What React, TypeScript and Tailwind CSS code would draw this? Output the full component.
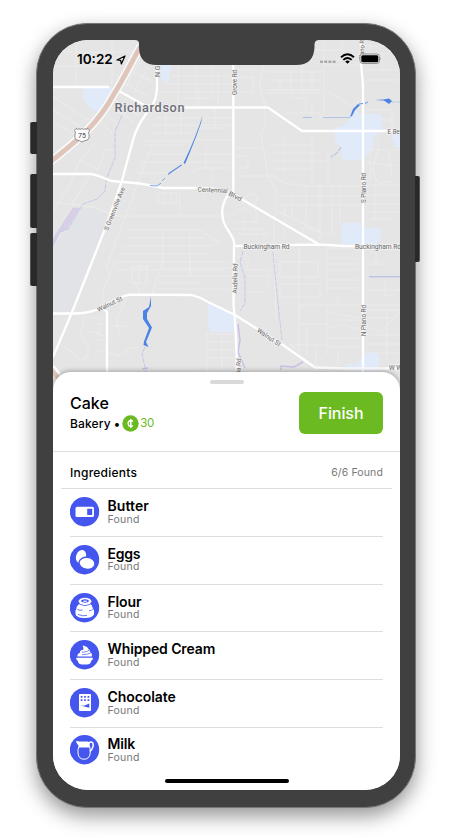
import React from "react";

const MINOR_ROADS = [
  "M53 66 H112 M76 42 V86 M60 52 H138 M112 42 V84 M53 96 L84 118 L102 122 M53 110 L84 129 M53 122 L78 136 M99 120 L112 133",
  "M115 100 L140 116 M110 107 L134 122 M104 114 L128 130 M126 84 L148 96 M133 72 L153 82 M140 60 L126 86 M148 66 L134 92",
  "M160 92 H232 M166 84 H232 M172 76 H232 M178 65 V104 M196 65 V106 M212 66 V98 M218 72 V106 M181 98 H210 M199 90 V106",
  "M155 118 H200 M152 125 H232 M149 133 H190 M146 141 H196 M205 118 H233 M200 128 H228 M198 140 H232 M166 108 V138 M181 108 V136 M215 108 V128",
  "M152 145 L106 268 L112 278 M140 162 H185 M146 154 H190 M134 173 H168 M143 145 H183 M190 162 H232 M196 154 H232 M192 172 V180 M192 172 L198 168 H230 M212 168 V182 M206 148 V168",
  "M98 140 L80 160 L70 184 L53 213 M106 149 L98 170 L80 160 M102 150 H116 M90 176 L72 204 M53 202 L92 207 L118 216 H230 M158 193 H177 V203 H158 Z M164 193 V203 M171 193 V203 M180 190 V216",
  "M128 230 H200 L220 243 M128 238 H205 M124 246 H212 L219 240 M122 254 H210 M118 262 H228 M115 270 H226 M163 232 V268 M190 230 V276 M130 268 H148 V262",
  "M163 260 L158 276 L152 294 M160 268 H234 M160 276 H234 M158 283 H200 M158 289 H230 M190 260 V276 M132 266 H147 V283 H132 Z M139 266 V283 M135 283 L139 290 L139 294 M116 260 L104 288 L102 308",
  "M84 315 V322 L80 334 L88 346 V356 L80 361 L72 352 L60 344 M88 318 H100 V332 H88 M96 324 H106 M92 332 L104 336 M95 356 L100 350 L120 356 L128 349 L138 347 M127 298 L120 312 L116 318 L120 334 M117 325 L128 327 M98 340 H105 M107 326 H118",
  "M207 333 V372 M207 334 H235 M207 342 H235 M207 350 H235 M207 358 H235 M155 369 H195 M222 333 V372",
  "M263 65 L260 85 L265 108 M236 70 H258 M236 77 H253 V92 H236 M265 72 H322 M270 80 H322 M266 90 H322 M280 78 V90 M291 72 V93 M302 65 V93 M312 70 V93 M265 93 H322 M324 42 V115 M324 65 H360 M325 90 L342 100 L350 106 L362 98",
  "M310 50 H342 V42 M330 60 H350 M365 46 H386 M366 70 H400 M370 42 V60 M382 52 V70 M366 80 H398 M320 117 H352 M285 113 H320 V120 M291 98 H306 V107 M312 102 V120 M366 110 H392 V128 M370 120 H395",
  "M265 100 V125 L261 135 L268 176 L276 190 V215 M236 148 H262 M236 156 H248 V168 H236 M237 176 H274 L284 183 L306 186 H360 M270 145 H310 M272 153 H320 M273 161 H326 M274 169 H310 M284 138 V174 M312 138 V183 M328 148 V184",
  "M277 196 H360 M277 205 H360 M278 212 L292 218 L330 236 M306 186 V222 M332 186 V236 M292 218 V196 M320 186 V240 M340 186 V225 M285 205 V214 M306 228 L320 232 L322 236 M236 206 L246 202 L256 212 M232 215 L244 207 L254 218 M244 199 L250 193 L258 198 L254 206",
  "M236 222 H260 M235 229 H264 V238 M238 234 H270 M244 218 V234 M256 208 V224 M274 214 V246 L276 320 M306 222 L300 240 M284 212 V238",
  "M366 150 H386 M370 140 V182 M378 140 V150 L372 170 L378 183 L394 181 M366 162 L396 166 M388 150 L392 176 M366 185 H400 M366 195 H400 M366 204 H400 M366 212 H400 M366 219 H396 M392 150 H399 M375 186 V220",
  "M280 262 H318 V277 H280 Z M300 248 V262 M280 284 H320 V297 H280 Z M299 248 V320 M299 305 H400 M327 258 H358 M327 264 H358 M327 270 H358 M327 280 H358 M327 288 H358 M327 250 V294 M338 298 V305 M327 248 H358",
  "M236 256 H248 V268 M244 270 H268 V286 L262 292 H248 M250 276 H268 M327 306 V355 M327 312 L360 318 M327 320 H360 M327 328 L345 325 L360 330 M327 338 H360 M327 347 H360 M299 305 V355 M300 324 H326 M307 325 V355 M290 345 L298 350 M366 310 H400 M366 318 H394",
  "M366 326 L380 333 L400 312 M366 335 H398 M366 344 H400 M385 278 V296 L395 294 M366 290 H400 M366 264 H386 M376 249 V262 M387 308 V360 M366 353 H400 M338 350 V366 M316 345 V366 M290 345 H326",
];

const MAJOR_ROADS = [
  "M53 87 H109 M119 91 L144 105 L160 107.5 H268 L302 131 H400",
  "M53 174 H90 C98 174 104 179 112 181 L140 183.5 L163 188 H202",
  "M202 188 C218 188 228 191 238 197 L320 245",
  "M234 246 L320 244.5 L345 246 H400",
  "M229 194 C220 205 221 218 226 227 C233 238 235 240 234 248",
  "M157 64 V84 C157 96 155 103 149 110 C139 123 136 130 133 140 L121.7 181.7 L105 229 L92.7 260 L71.7 313 L53 357",
  "M233.3 64 V193",
  "M234 246 L233.5 305 Q236 325 237 374",
  "M361 40 V63 L363 85 V372",
  "M53 313.5 H76 Q92 313 102 307 Q122 295 131 294.6 L192 295 Q200 297 208 302 L235 315 L283 345 L315 367.5 L345 368.5 H400",
  "M102 307 L107 312 V372",
  "M53 366 L60 374",
];

const LABELS: { text: string; x: number; y: number; rotate: number; length: number }[] = [
  { text: "N Gr", x: 159.5, y: 77, rotate: -90, length: 14 },
  { text: "Grove Rd", x: 236.6, y: 95, rotate: -90, length: 25 },
  { text: "Plano R", x: 363.8, y: 60, rotate: -88, length: 20 },
  { text: "S Greenville Ave", x: 108, y: 231, rotate: -68, length: 46 },
  { text: "Centennial", x: 197.5, y: 191.5, rotate: 3, length: 30 },
  { text: "Blvd", x: 228, y: 195, rotate: 27, length: 14 },
  { text: "S Plano Rd", x: 366.4, y: 203, rotate: -90, length: 30 },
  { text: "Buckingham Rd", x: 243.5, y: 248.7, rotate: 0, length: 46 },
  { text: "Buckingham Rd", x: 355, y: 248.9, rotate: 0, length: 46 },
  { text: "Audelia Rd", x: 237, y: 293.5, rotate: -89, length: 30 },
  { text: "Audelia Rd", x: 240, y: 388.5, rotate: -88, length: 30 },
  { text: "Walnut St", x: 98.5, y: 312, rotate: -26, length: 27 },
  { text: "Walnut St", x: 256.5, y: 331.5, rotate: 34, length: 27 },
  { text: "N Plano Rd", x: 366.4, y: 336, rotate: -90, length: 31 },
  { text: "E Be", x: 387.6, y: 134.3, rotate: 0, length: 12.2 },
  { text: "W W", x: 389, y: 370, rotate: 0, length: 13 },
];

function CityMap() {
  return (
    <svg className="block h-full w-full" viewBox="53 40 347 362" fill="none">
      <rect x="53" y="40" width="347" height="362" fill="#e5e5e5" />
      <path d="M80 208 L92 208 L112 216 L90 268 L71 312 L53 312 V245 L67 230Z" fill="#e2e3e6" />
      <g fill="#e0eaf8">
        <path d="M83 86 H110 L116 89 L98 113 L90 108 L83 99Z" />
        <path d="M160 64 H172 L168 82 L162 81Z" />
        <path d="M353 111 H359 V114 H380 L382 116 V131 L375 135 L373 150 L368 153 L364 160 H342 L341 147 L335 142 V128 L345 125 L351 117Z" />
        <path d="M400 132 H392 L392 139 L396 147 L400 149Z" />
        <path d="M342 223 H361 V228 H378 L382 231 L380 241 L375 244 H341Z" />
        <path d="M208 301 L236 316 L237 332 H211 L208 326Z" />
        <path d="M345 364 H357 L364 354 L375 352 L380 357 L379 366 L374 372 L346 370Z" />
      </g>
      <path d="M72.7 207.7 H80 L67 229 L60 232 L53 245 V238Z" fill="#d8cfe7" />
      <g stroke="#ededed" strokeWidth="0.8">
        {MINOR_ROADS.map((d) => (
          <path key={d} d={d} />
        ))}
      </g>
      <g stroke="#b5c4e6" strokeWidth="0.8" strokeDasharray="5 1">
        <path d="M122 115 L115 132 L115 158 L110 170 L106 180 L105 191 L97 199 L83 204 L68 229 L60 232 L53 245" />
        <path d="M303 117.5 H312 M323 117.5 H350" stroke="#9eb7ea" strokeDasharray="none" />
        <path d="M341 147 L337 153 L331 157" stroke="#8fb0ea" />
        <path d="M243 251 L240 262 L245 278 L245 303 L240 311" />
        <path d="M273 252 L276 285 L282 340" stroke="#c9bfe3" />
        <path d="M145 347 L142 354 L145 367 L146 374" />
        <path d="M391 102 H400" />
      </g>
      <path d="M238 324 L240 340 L238 352 L245 368 M281 370 V366 L294 367 L303 362 M142 369 L148 368" stroke="#cbbfe3" strokeWidth="1.5" />
      <path d="M369 276.8 H400" stroke="#a8b6e6" />
      <g stroke="#fff">
        {MAJOR_ROADS.map((d) => (
          <path key={d} d={d} strokeWidth="2.3" strokeLinejoin="round" />
        ))}
      </g>
      <path d="M148 34 C133 58 126 75 114 94 C97 125 79 139 49 163" stroke="#fff" strokeWidth="8" />
      <path d="M148 34 C133 58 126 75 114 94 C97 125 79 139 49 163" stroke="#e6dddd" strokeWidth="5.8" />
      <path d="M148 34 C133 58 126 75 114 94 C97 125 79 139 49 163 M52 370 L58 378" stroke="#dfc4b7" strokeWidth="4.2" />
      <g fill="#4b83e4">
        <path d="M202.5 116 L201 123 L196 137 L190 152 L185 164 L183.500 163 L190 149 L195 137 L199.500 125Z" />
        <path d="M182 165 L169 174 L168 175 L169 173 L181 165Z" stroke="#4b83e4" strokeWidth="0.4" />
        <path d="M151 296 L151 306 L147 313 L147 319 L152 327.500 L146 342 L148.500 347 L143.500 345 L144 341.500 L149 328 L143 319 V311 L149 307 L150 302Z" />
        <path d="M350 117 L353 109 L358 104 L360 105 L355 110 L352 116Z" />
        <path d="M375 100 L383 99.500 L389 98.500 L392 101 L389 104 L384 100.500Z" />
      </g>
      <path d="M165 178 L162 181 M161 183 L157 186 L150 185.500" stroke="#82a6e8" />
      <path d="M359 104 L363 103.500 M365 103.500 L368 102" stroke="#6c98e6" />
      <g
        fontFamily='Roboto, "Noto Sans", sans-serif'
        fontSize="6.500"
        fill="#686868"
        stroke="#f1f1f1"
        strokeWidth="1.6"
        strokeLinejoin="round"
        paintOrder="stroke"
      >
        {LABELS.map((l) => (
          <text
            key={`${l.text}-${l.y}`}
            transform={`translate(${l.x} ${l.y}) rotate(${l.rotate})`}
            textLength={l.length}
            lengthAdjust="spacingAndGlyphs"
          >
            {l.text}
          </text>
        ))}
      </g>
      <text
        x="114.500"
        y="112"
        textLength="70"
        fontFamily="Roboto, sans-serif"
        fontSize="12.700"
        fontWeight="500"
        fill="#6d7078"
        stroke="#ededed"
        strokeWidth="1.5"
        paintOrder="stroke"
      >
        Richardson
      </text>
      <path
        d="M76 128.500 Q78 130 79 128.800 Q80.500 130 82 128.500 Q83.500 130 85 128.800 Q86 130 88 128.500 L89.500 130.500 Q88 132 89 134.500 Q90 138 87.500 140 Q84 140.500 82 142 Q80 140.500 76.500 140 Q74 138 75 134.500 Q76 132 74.500 130.500Z"
        fill="#fafafa"
        stroke="#777"
        strokeWidth="0.8"
      />
      <text x="82" y="138" textAnchor="middle" fontFamily="Roboto, sans-serif" fontSize="7" fill="#444">
        75
      </text>
    </svg>
  );
}

function StatusIcons() {
  return (
    <svg className="h-3 w-[62px]" viewBox="0 0 62 12">
      <g fill="#aaa">
        <rect x="0" y="7.500" width="3" height="2.500" rx="0.8" />
        <rect x="4.200" y="7.500" width="3" height="2.500" rx="0.8" />
        <rect x="8.400" y="7.500" width="3" height="2.500" rx="0.8" />
        <rect x="12.600" y="7.500" width="3" height="2.500" rx="0.8" />
      </g>
      <g fill="none" stroke="#000" strokeWidth="1.900">
        <path d="M21 4.200 Q27.500 -1.800 34 4.200" />
        <path d="M23.300 6.900 Q27.500 3.100 31.700 6.900" />
      </g>
      <path d="M25.200 8.400 Q27.500 6.500 29.800 8.400 L27.500 10.800Z" />
      <rect x="40" y="1" width="19.500" height="9.500" rx="2.600" fill="#e5e5e5" stroke="#8c8c8c" strokeWidth="0.9" />
      <rect x="41.300" y="2.300" width="17" height="7" rx="1.500" />
      <path d="M60.500 4.300 Q62 5.700 60.500 7.200Z" fill="#8c8c8c" />
    </svg>
  );
}

function Disc({ children }: { children: React.ReactNode }) {
  return (
    <svg className="size-[30px] shrink-0" viewBox="0 0 30 30">
      <circle cx="14.500" cy="14.700" r="14.700" fill="#4556ef" />
      {children}
    </svg>
  );
}

const INGREDIENTS: { name: string; tracking: string; icon: React.ReactNode }[] = [
  {
    name: "Butter",
    tracking: "tracking-[0.006em]",
    icon: (
      <>
        <rect x="5.500" y="9.800" width="18.500" height="10.200" rx="1.600" fill="#fff" />
        <rect x="17.200" y="11.800" width="5" height="6.200" rx="0.4" fill="#4556ef" />
      </>
    ),
  },
  {
    name: "Eggs",
    tracking: "tracking-[-0.015em]",
    icon: (
      <>
        <ellipse cx="11" cy="11.500" rx="4.900" ry="6.700" transform="rotate(22 11 11.500)" fill="#fff" />
        <ellipse cx="17" cy="18.300" rx="8" ry="6" transform="rotate(8 17 18.300)" fill="#fff" stroke="#4556ef" strokeWidth="1.300" />
      </>
    ),
  },
  {
    name: "Flour",
    tracking: "tracking-[-0.01em]",
    icon: (
      <>
        <path d="M10.500 10 Q6 13 6.500 15.500 Q4.500 18 6 22.500 Q9 25.500 15 25 Q22 25 24 21.500 Q25 18 22.800 15 Q22.500 12 19.500 10Z" fill="#fff" />
        <ellipse cx="15" cy="8.200" rx="6.400" ry="3.500" fill="#fff" />
        <path d="M10.800 8 Q11.500 6.300 15 6.200 Q18.500 6.300 19.200 8 Q18 9.800 15 9.800 Q12 9.800 10.800 8Z" fill="#4556ef" />
        <path d="M12.800 8.800 Q14 7 15.200 7.700 Q16.500 7.200 17.200 8.800Z" fill="#fff" />
        <path d="M9.500 11.300 Q15 14 20.500 11.300 M7.300 16.500 Q10 17.800 12.500 17 M19 18 Q22 17.500 22.800 16 M8 21.500 Q13 23.500 17 22.500" fill="none" stroke="#4556ef" strokeWidth="0.8" />
      </>
    ),
  },
  {
    name: "Whipped Cream",
    tracking: "tracking-[-0.008em]",
    icon: (
      <>
        <path d="M6.300 17.800 H22.700 Q23.500 19.500 21.500 20.500 Q20.800 22.500 19.600 24 Q14.500 25 9.500 24 Q8.300 22.500 7.500 20.500 Q5.600 19.500 6.300 17.800Z" fill="#fff" />
        <path d="M12.500 5.500 Q17.500 6.200 18.300 9 Q20.500 10 19.800 11.700 Q22.500 13 21.800 16.500 H7.500 Q7 13.800 10 12.800 Q9.300 10.500 12.700 10 Q14.300 8.500 12.500 5.500Z" fill="#fff" />
        <path d="M12 12.300 Q17 12 19 10.300 M12 14.700 Q18 14.500 21 12.800" fill="none" stroke="#4556ef" strokeWidth="0.7" />
      </>
    ),
  },
  {
    name: "Chocolate",
    tracking: "tracking-[-0.006em]",
    icon: (
      <>
        <rect x="9" y="6" width="12" height="17" rx="0.8" fill="#fff" />
        <path d="M11.600 8 V14.600 M15 8 V14.600 M18.400 8 V14.600" stroke="#4556ef" strokeWidth="1.700" strokeDasharray="1.700 1.600" />
        <path d="M10.500 17.500 L14 17.700 L19.300 15.500 V19.700 L15 18.800Z" fill="#4556ef" />
      </>
    ),
  },
  {
    name: "Milk",
    tracking: "tracking-[-0.01em]",
    icon: (
      <>
        <path d="M6.200 5.800 Q8 6.600 11 6.400 H17.500 Q19 6.200 19.800 8 L19.500 12.600 H8.600 Q8.800 9.800 7 8.500 Q6 7.200 6.200 5.800Z" fill="#fff" />
        <path d="M9 11.500 Q7.600 14 8 18 Q8.500 24.200 14 24.200 Q19.700 24.200 20.200 18 Q20.500 14 19.500 11" fill="none" stroke="#fff" strokeWidth="1" />
        <path d="M18.800 7.800 Q22.800 5.800 23.200 9.300 Q23.400 13.500 20 16.300" fill="none" stroke="#fff" strokeWidth="1.500" />
      </>
    ),
  },
];

export default function App() {
  return (
    <main className="h-[838px] w-[451px] overflow-hidden bg-white pl-9 pt-[23px] font-[Inter,sans-serif]">
      <div className="relative h-[784.5px] w-[380px] rounded-[51px] border border-[#777] bg-[#404040] px-4 pt-4 shadow-[0_8px_20px_rgba(0,0,0,0.42)]">
        <i className="absolute -left-[7px] top-[98px] h-[32px] w-[7px] rounded-l-[2px] border-l border-[#555] bg-[#292929]" />
        <i className="absolute -left-[7px] top-[150px] h-[54px] w-[7px] rounded-l-[2px] border-l border-[#555] bg-[#292929]" />
        <i className="absolute -left-[7px] top-[209px] h-[53px] w-[7px] rounded-l-[2px] border-l border-[#555] bg-[#292929]" />
        <i className="absolute -right-[5px] top-[152px] h-[86px] w-[5px] rounded-r-[2px] border-r border-[#555] bg-[#292929]" />

        <div className="relative flex h-[750px] w-[347px] flex-col overflow-hidden rounded-[35px] bg-white">
          <div className="h-[362px] shrink-0">
            <CityMap />
          </div>

          <header className="absolute inset-x-0 top-0 flex h-[38px] items-center justify-between pl-[24px] pr-[18px]">
            <div className="flex items-center gap-[3px] pt-[1px]">
              <time className="text-[13.5px] font-semibold leading-none">10:22</time>
              <svg className="size-[10px]" viewBox="0 0 10 10">
                <path d="M1 5 L9 1 L5.300 9 L4.700 5.300Z" fill="none" stroke="#000" strokeWidth="1.200" strokeLinejoin="round" />
              </svg>
            </div>
            <StatusIcons />
          </header>
          <svg className="absolute left-[82px] top-0 h-[25px] w-[184px]" viewBox="0 0 184 25">
            <path d="M0 0 Q4 0 4 4 V7 Q4 25 22 25 H161 Q179 25 179.500 7 V4 Q180 0 184 0Z" fill="#404040" />
          </svg>

          <section className="relative -mt-[30px] flex h-[418px] shrink-0 flex-col rounded-t-[18px] bg-white shadow-[0_-1px_5px_rgba(0,0,0,0.3)]">
            <div className="mx-auto mt-2 h-1 w-[34px] shrink-0 rounded-full bg-[#d9d9d9]" />
            <div className="flex h-[68px] shrink-0 items-start justify-between border-b border-[#dedede] pl-[17px] pr-[17px] pt-2">
              <div>
                <h1 className="mt-[1px] text-[16px] font-medium leading-[20px]">Cake</h1>
                <div className="flex h-[21px] items-center text-[12px] font-medium">
                  <span className="tracking-[0.012em]">Bakery</span>
                  <span className="ml-[3px] w-[7px]">•</span>
                  <svg className="ml-px mr-[1.5px] size-[17px]" viewBox="0 0 17 17">
                    <circle cx="8.500" cy="8.500" r="8.200" fill="#6cba22" />
                    <path d="M11 6.500 Q8.500 4.500 6.700 6.500 Q5.300 8.500 6.700 10.500 Q8.500 12.300 11 10.500 M8.800 4 V13" stroke="#fff" strokeWidth="1.500" fill="none" />
                  </svg>
                  <span className="pt-px text-[11.5px] font-normal tracking-[-0.03em] text-[#6cba22]">30</span>
                </div>
              </div>
              <button className="h-[42px] w-[84px] rounded-[6px] bg-[#6cba22] text-[16px] font-medium tracking-[-0.005em] text-white">
                Finish
              </button>
            </div>

            <div className="mx-2 flex h-[37px] shrink-0 items-center justify-between border-b border-[#dedede] px-[9px] pt-[5px]">
              <h2 className="text-[12px] font-medium tracking-[0.02em]">Ingredients</h2>
              <span className="text-[10.5px] tracking-[0.012em] text-[#777]">6/6 Found</span>
            </div>
            <ul className="mx-[17px]">
              {INGREDIENTS.map((item) => (
                <li key={item.name} className="flex h-[47.75px] items-center gap-[7.5px] border-b border-[#dedede] pb-[0.5px] last:border-b-0 last:pb-[2.5px]">
                  <Disc>{item.icon}</Disc>
                  <div>
                    <h3 className={`text-[14px] font-semibold leading-[15.5px] ${item.tracking}`}>{item.name}</h3>
                    <p className="text-[10.5px] leading-[12.5px] tracking-[0.025em] text-[#777]">Found</p>
                  </div>
                </li>
              ))}
            </ul>
          </section>
          <i className="absolute bottom-[7px] left-[112px] h-1 w-[124px] rounded-full bg-black" />
        </div>
      </div>
    </main>
  );
}
